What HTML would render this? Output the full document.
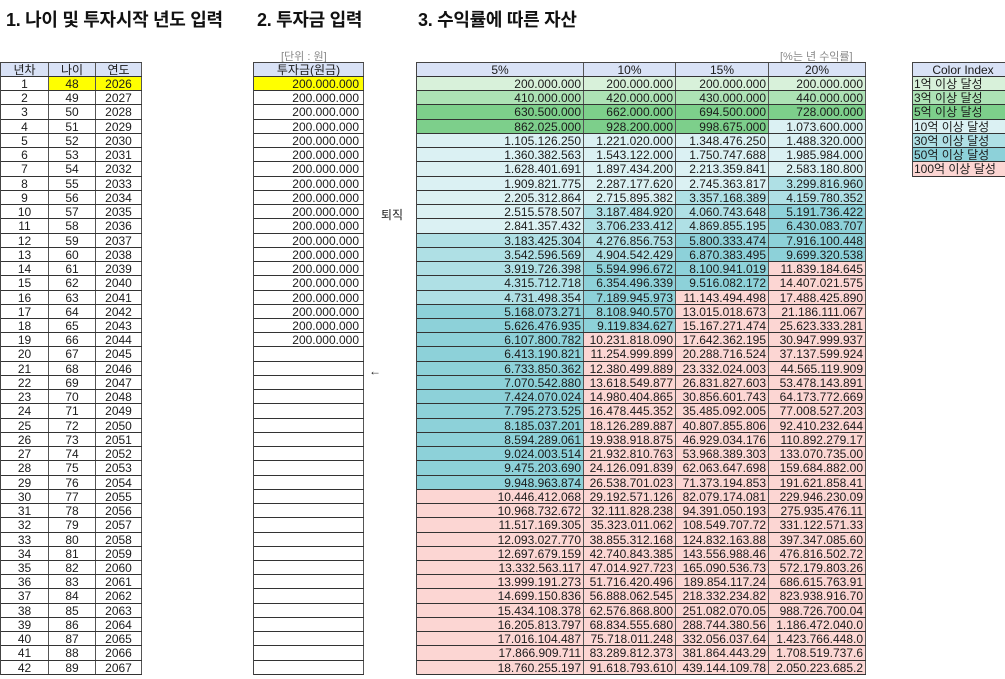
<!DOCTYPE html>
<html><head><meta charset="utf-8">
<style>
*{margin:0;padding:0;box-sizing:border-box}
body{width:1005px;height:679px;background:#fff;position:relative;overflow:hidden;font-family:"Liberation Sans","Noto Sans CJK KR",sans-serif;color:#1b1b1b}
.t{position:absolute;font-weight:bold;font-size:18px;top:6px;color:#111;letter-spacing:-0.3px}
.note{position:absolute;font-size:11px;color:#888;top:48px}
.tb{position:absolute;top:62px;border-left:1px solid #444;border-top:1px solid #444}
.r{display:flex;height:14.24px;border-bottom:1px solid #333}
.r.h{height:14px;background:#d9e2f6}
.r i{font-style:normal;display:block;height:100%;border-right:1px solid #555;font-size:12px;line-height:15px;overflow:hidden;white-space:nowrap}
.c i{text-align:center}
#t1 i:nth-child(1){width:48px}#t1 i:nth-child(2){width:47px}#t1 i:nth-child(3){width:46px}
#t2 i{width:110px;text-align:right;padding-right:4px}
#t2 .h i{text-align:center;padding:0}
#t3 i{text-align:right;padding-right:2px}
#t3 i:nth-child(1){width:167px}#t3 i:nth-child(2){width:92px}#t3 i:nth-child(3){width:93px}#t3 i:nth-child(4){width:97px}
#t3 .h i{text-align:center;padding:0}
#t4 i{width:100px;text-align:left;padding-left:1px}
#t4 .h i{text-align:center}
.y{background:#ffff00}
.a{background:#d8f1da}.b{background:#ade2b5}.d{background:#7dcf8b}
.e{background:#dbf1f3}.f{background:#afe0e5}.g{background:#8dd1d9}.p{background:#fcd6d3}
</style></head><body>
<div class="t" style="left:6px">1. 나이 및 투자시작 년도 입력</div>
<div class="t" style="left:257px">2. 투자금 입력</div>
<div class="t" style="left:418px">3. 수익률에 따른 자산</div>
<div class="note" style="left:281px">[단위 : 원]</div>
<div class="note" style="left:780px">[%는 년 수익률]</div>
<div style="position:absolute;left:381px;top:206px;font-size:12px">퇴직</div>
<div style="position:absolute;left:369px;top:364px;font-size:12px">←</div>

<div class="tb c" id="t1" style="left:0px">
<div class="r h"><i>년차</i><i>나이</i><i>연도</i></div>
<div class="r"><i>1</i><i class="y">48</i><i class="y">2026</i></div>
<div class="r"><i>2</i><i>49</i><i>2027</i></div>
<div class="r"><i>3</i><i>50</i><i>2028</i></div>
<div class="r"><i>4</i><i>51</i><i>2029</i></div>
<div class="r"><i>5</i><i>52</i><i>2030</i></div>
<div class="r"><i>6</i><i>53</i><i>2031</i></div>
<div class="r"><i>7</i><i>54</i><i>2032</i></div>
<div class="r"><i>8</i><i>55</i><i>2033</i></div>
<div class="r"><i>9</i><i>56</i><i>2034</i></div>
<div class="r"><i>10</i><i>57</i><i>2035</i></div>
<div class="r"><i>11</i><i>58</i><i>2036</i></div>
<div class="r"><i>12</i><i>59</i><i>2037</i></div>
<div class="r"><i>13</i><i>60</i><i>2038</i></div>
<div class="r"><i>14</i><i>61</i><i>2039</i></div>
<div class="r"><i>15</i><i>62</i><i>2040</i></div>
<div class="r"><i>16</i><i>63</i><i>2041</i></div>
<div class="r"><i>17</i><i>64</i><i>2042</i></div>
<div class="r"><i>18</i><i>65</i><i>2043</i></div>
<div class="r"><i>19</i><i>66</i><i>2044</i></div>
<div class="r"><i>20</i><i>67</i><i>2045</i></div>
<div class="r"><i>21</i><i>68</i><i>2046</i></div>
<div class="r"><i>22</i><i>69</i><i>2047</i></div>
<div class="r"><i>23</i><i>70</i><i>2048</i></div>
<div class="r"><i>24</i><i>71</i><i>2049</i></div>
<div class="r"><i>25</i><i>72</i><i>2050</i></div>
<div class="r"><i>26</i><i>73</i><i>2051</i></div>
<div class="r"><i>27</i><i>74</i><i>2052</i></div>
<div class="r"><i>28</i><i>75</i><i>2053</i></div>
<div class="r"><i>29</i><i>76</i><i>2054</i></div>
<div class="r"><i>30</i><i>77</i><i>2055</i></div>
<div class="r"><i>31</i><i>78</i><i>2056</i></div>
<div class="r"><i>32</i><i>79</i><i>2057</i></div>
<div class="r"><i>33</i><i>80</i><i>2058</i></div>
<div class="r"><i>34</i><i>81</i><i>2059</i></div>
<div class="r"><i>35</i><i>82</i><i>2060</i></div>
<div class="r"><i>36</i><i>83</i><i>2061</i></div>
<div class="r"><i>37</i><i>84</i><i>2062</i></div>
<div class="r"><i>38</i><i>85</i><i>2063</i></div>
<div class="r"><i>39</i><i>86</i><i>2064</i></div>
<div class="r"><i>40</i><i>87</i><i>2065</i></div>
<div class="r"><i>41</i><i>88</i><i>2066</i></div>
<div class="r"><i>42</i><i>89</i><i>2067</i></div>
</div>

<div class="tb" id="t2" style="left:253px">
<div class="r h"><i>투자금(원금)</i></div>
<div class="r"><i class="y">200.000.000</i></div>
<div class="r"><i>200.000.000</i></div>
<div class="r"><i>200.000.000</i></div>
<div class="r"><i>200.000.000</i></div>
<div class="r"><i>200.000.000</i></div>
<div class="r"><i>200.000.000</i></div>
<div class="r"><i>200.000.000</i></div>
<div class="r"><i>200.000.000</i></div>
<div class="r"><i>200.000.000</i></div>
<div class="r"><i>200.000.000</i></div>
<div class="r"><i>200.000.000</i></div>
<div class="r"><i>200.000.000</i></div>
<div class="r"><i>200.000.000</i></div>
<div class="r"><i>200.000.000</i></div>
<div class="r"><i>200.000.000</i></div>
<div class="r"><i>200.000.000</i></div>
<div class="r"><i>200.000.000</i></div>
<div class="r"><i>200.000.000</i></div>
<div class="r"><i>200.000.000</i></div>
<div class="r"><i></i></div><div class="r"><i></i></div><div class="r"><i></i></div><div class="r"><i></i></div>
<div class="r"><i></i></div><div class="r"><i></i></div><div class="r"><i></i></div><div class="r"><i></i></div>
<div class="r"><i></i></div><div class="r"><i></i></div><div class="r"><i></i></div><div class="r"><i></i></div>
<div class="r"><i></i></div><div class="r"><i></i></div><div class="r"><i></i></div><div class="r"><i></i></div>
<div class="r"><i></i></div><div class="r"><i></i></div><div class="r"><i></i></div><div class="r"><i></i></div>
<div class="r"><i></i></div><div class="r"><i></i></div><div class="r"><i></i></div>
</div>

<div class="tb" id="t3" style="left:416px">
<div class="r h"><i>5%</i><i>10%</i><i>15%</i><i>20%</i></div>
<div class="r"><i class="a">200.000.000</i><i class="a">200.000.000</i><i class="a">200.000.000</i><i class="a">200.000.000</i></div>
<div class="r"><i class="b">410.000.000</i><i class="b">420.000.000</i><i class="b">430.000.000</i><i class="b">440.000.000</i></div>
<div class="r"><i class="d">630.500.000</i><i class="d">662.000.000</i><i class="d">694.500.000</i><i class="d">728.000.000</i></div>
<div class="r"><i class="d">862.025.000</i><i class="d">928.200.000</i><i class="d">998.675.000</i><i class="e">1.073.600.000</i></div>
<div class="r"><i class="e">1.105.126.250</i><i class="e">1.221.020.000</i><i class="e">1.348.476.250</i><i class="e">1.488.320.000</i></div>
<div class="r"><i class="e">1.360.382.563</i><i class="e">1.543.122.000</i><i class="e">1.750.747.688</i><i class="e">1.985.984.000</i></div>
<div class="r"><i class="e">1.628.401.691</i><i class="e">1.897.434.200</i><i class="e">2.213.359.841</i><i class="e">2.583.180.800</i></div>
<div class="r"><i class="e">1.909.821.775</i><i class="e">2.287.177.620</i><i class="e">2.745.363.817</i><i class="f">3.299.816.960</i></div>
<div class="r"><i class="e">2.205.312.864</i><i class="e">2.715.895.382</i><i class="f">3.357.168.389</i><i class="f">4.159.780.352</i></div>
<div class="r"><i class="e">2.515.578.507</i><i class="f">3.187.484.920</i><i class="f">4.060.743.648</i><i class="g">5.191.736.422</i></div>
<div class="r"><i class="e">2.841.357.432</i><i class="f">3.706.233.412</i><i class="f">4.869.855.195</i><i class="g">6.430.083.707</i></div>
<div class="r"><i class="f">3.183.425.304</i><i class="f">4.276.856.753</i><i class="g">5.800.333.474</i><i class="g">7.916.100.448</i></div>
<div class="r"><i class="f">3.542.596.569</i><i class="f">4.904.542.429</i><i class="g">6.870.383.495</i><i class="g">9.699.320.538</i></div>
<div class="r"><i class="f">3.919.726.398</i><i class="g">5.594.996.672</i><i class="g">8.100.941.019</i><i class="p">11.839.184.645</i></div>
<div class="r"><i class="f">4.315.712.718</i><i class="g">6.354.496.339</i><i class="g">9.516.082.172</i><i class="p">14.407.021.575</i></div>
<div class="r"><i class="f">4.731.498.354</i><i class="g">7.189.945.973</i><i class="p">11.143.494.498</i><i class="p">17.488.425.890</i></div>
<div class="r"><i class="g">5.168.073.271</i><i class="g">8.108.940.570</i><i class="p">13.015.018.673</i><i class="p">21.186.111.067</i></div>
<div class="r"><i class="g">5.626.476.935</i><i class="g">9.119.834.627</i><i class="p">15.167.271.474</i><i class="p">25.623.333.281</i></div>
<div class="r"><i class="g">6.107.800.782</i><i class="p">10.231.818.090</i><i class="p">17.642.362.195</i><i class="p">30.947.999.937</i></div>
<div class="r"><i class="g">6.413.190.821</i><i class="p">11.254.999.899</i><i class="p">20.288.716.524</i><i class="p">37.137.599.924</i></div>
<div class="r"><i class="g">6.733.850.362</i><i class="p">12.380.499.889</i><i class="p">23.332.024.003</i><i class="p">44.565.119.909</i></div>
<div class="r"><i class="g">7.070.542.880</i><i class="p">13.618.549.877</i><i class="p">26.831.827.603</i><i class="p">53.478.143.891</i></div>
<div class="r"><i class="g">7.424.070.024</i><i class="p">14.980.404.865</i><i class="p">30.856.601.743</i><i class="p">64.173.772.669</i></div>
<div class="r"><i class="g">7.795.273.525</i><i class="p">16.478.445.352</i><i class="p">35.485.092.005</i><i class="p">77.008.527.203</i></div>
<div class="r"><i class="g">8.185.037.201</i><i class="p">18.126.289.887</i><i class="p">40.807.855.806</i><i class="p">92.410.232.644</i></div>
<div class="r"><i class="g">8.594.289.061</i><i class="p">19.938.918.875</i><i class="p">46.929.034.176</i><i class="p">110.892.279.17</i></div>
<div class="r"><i class="g">9.024.003.514</i><i class="p">21.932.810.763</i><i class="p">53.968.389.303</i><i class="p">133.070.735.00</i></div>
<div class="r"><i class="g">9.475.203.690</i><i class="p">24.126.091.839</i><i class="p">62.063.647.698</i><i class="p">159.684.882.00</i></div>
<div class="r"><i class="g">9.948.963.874</i><i class="p">26.538.701.023</i><i class="p">71.373.194.853</i><i class="p">191.621.858.41</i></div>
<div class="r"><i class="p">10.446.412.068</i><i class="p">29.192.571.126</i><i class="p">82.079.174.081</i><i class="p">229.946.230.09</i></div>
<div class="r"><i class="p">10.968.732.672</i><i class="p">32.111.828.238</i><i class="p">94.391.050.193</i><i class="p">275.935.476.11</i></div>
<div class="r"><i class="p">11.517.169.305</i><i class="p">35.323.011.062</i><i class="p">108.549.707.72</i><i class="p">331.122.571.33</i></div>
<div class="r"><i class="p">12.093.027.770</i><i class="p">38.855.312.168</i><i class="p">124.832.163.88</i><i class="p">397.347.085.60</i></div>
<div class="r"><i class="p">12.697.679.159</i><i class="p">42.740.843.385</i><i class="p">143.556.988.46</i><i class="p">476.816.502.72</i></div>
<div class="r"><i class="p">13.332.563.117</i><i class="p">47.014.927.723</i><i class="p">165.090.536.73</i><i class="p">572.179.803.26</i></div>
<div class="r"><i class="p">13.999.191.273</i><i class="p">51.716.420.496</i><i class="p">189.854.117.24</i><i class="p">686.615.763.91</i></div>
<div class="r"><i class="p">14.699.150.836</i><i class="p">56.888.062.545</i><i class="p">218.332.234.82</i><i class="p">823.938.916.70</i></div>
<div class="r"><i class="p">15.434.108.378</i><i class="p">62.576.868.800</i><i class="p">251.082.070.05</i><i class="p">988.726.700.04</i></div>
<div class="r"><i class="p">16.205.813.797</i><i class="p">68.834.555.680</i><i class="p">288.744.380.56</i><i class="p">1.186.472.040.0</i></div>
<div class="r"><i class="p">17.016.104.487</i><i class="p">75.718.011.248</i><i class="p">332.056.037.64</i><i class="p">1.423.766.448.0</i></div>
<div class="r"><i class="p">17.866.909.711</i><i class="p">83.289.812.373</i><i class="p">381.864.443.29</i><i class="p">1.708.519.737.6</i></div>
<div class="r"><i class="p">18.760.255.197</i><i class="p">91.618.793.610</i><i class="p">439.144.109.78</i><i class="p">2.050.223.685.2</i></div>
</div>

<div class="tb" id="t4" style="left:912px">
<div class="r h"><i>Color Index</i></div>
<div class="r"><i class="a">1억 이상 달성</i></div>
<div class="r"><i class="b">3억 이상 달성</i></div>
<div class="r"><i class="d">5억 이상 달성</i></div>
<div class="r"><i class="e">10억 이상 달성</i></div>
<div class="r"><i class="f">30억 이상 달성</i></div>
<div class="r"><i class="g">50억 이상 달성</i></div>
<div class="r"><i class="p">100억 이상 달성</i></div>
</div>
</body></html>
